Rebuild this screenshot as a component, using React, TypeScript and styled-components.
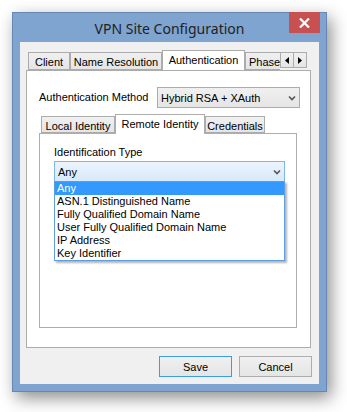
import React from 'react'
import styled, { createGlobalStyle } from 'styled-components'

const GlobalStyle = createGlobalStyle`
  html, body {
    margin: 0;
    padding: 0;
    background: #ffffff;
  }
  body {
    font-family: "Liberation Sans", Arial, sans-serif;
    font-size: 11px;
    color: #000;
  }
`

const Page = styled.div`
  width: 347px;
  height: 412px;
  box-sizing: border-box;
  padding: 12px 0 0 12px;
  overflow: hidden;
`

const Window = styled.div`
  width: 315px;
  height: 380px;
  box-sizing: border-box;
  background: #7ea4cf;
  border: 1px solid #6488b3;
  box-shadow: 4px 6px 16px rgba(0, 0, 0, 0.45);
  display: flex;
  flex-direction: column;
`

const TitleBar = styled.div`
  height: 29px;
  display: grid;
  grid-template-columns: 1fr auto 1fr;
  align-items: center;
`

const Title = styled.div`
  grid-column: 2;
  font-family: "Noto Sans", "Open Sans", sans-serif;
  font-size: 14px;
  color: #222;
  padding-top: 1px;
`

const CloseButton = styled.div`
  grid-column: 3;
  justify-self: end;
  align-self: start;
  width: 31px;
  height: 21px;
  margin: -1px 6px 0 0;
  background: #c75050;
  display: flex;
  align-items: center;
  justify-content: center;
`

const ClientArea = styled.div`
  flex: 1;
  margin: 0 7px 7px;
  background: #f0f0f0;
  padding-top: 8px;
  display: flex;
  flex-direction: column;
`

const TabStrip = styled.div<{ $inset: number }>`
  display: flex;
  align-items: flex-end;
  margin-left: ${p => p.$inset}px;
  position: relative;
  z-index: 1;
`

const TabClip = styled.div<{ $width: number }>`
  width: ${p => p.$width}px;
  overflow: hidden;
  display: flex;
  align-items: flex-end;
`

const Tab = styled.div<{ $width: number; $active?: boolean; $h: number }>`
  flex: none;
  width: ${p => p.$width}px;
  height: ${p => (p.$active ? p.$h + 3 : p.$h)}px;
  box-sizing: border-box;
  border: 1px solid #acacac;
  border-bottom: ${p => (p.$active ? 'none' : '1px solid #acacac')};
  margin-bottom: ${p => (p.$active ? '-1px' : '0')};
  background: ${p => (p.$active ? '#ffffff' : 'linear-gradient(#f0f0f0, #e5e5e5)')};
  display: flex;
  justify-content: center;
  padding-top: 3px;
  white-space: nowrap;
  font-size: 11px;
`

const PhaseTab = styled(Tab)`
  justify-content: flex-start;
  padding-left: 3px;
`

const ScrollArrows = styled.div`
  display: flex;
  align-self: flex-start;
  margin-top: 2px;
`

const ArrowButton = styled.div`
  width: 14px;
  height: 16px;
  box-sizing: border-box;
  border: 1px solid #acacac;
  background: linear-gradient(#f0f0f0, #e5e5e5);
  display: flex;
  align-items: center;
  justify-content: center;
  & + & {
    margin-left: -1px;
  }
`

const OuterPanel = styled.div`
  width: 285px;
  height: 278px;
  margin-left: 6px;
  box-sizing: border-box;
  background: #ffffff;
  border: 1px solid #acacac;
  padding: 16px 0 0 12px;
  display: flex;
  flex-direction: column;
`

const FieldRow = styled.div`
  display: flex;
  align-items: center;
  justify-content: space-between;
  width: 261px;
`

const Label = styled.span`
  font-size: 11px;
  line-height: 13px;
  white-space: nowrap;
`

const Select = styled.div<{ $focused?: boolean }>`
  position: relative;
  width: ${p => (p.$focused ? 231 : 143)}px;
  height: 21px;
  box-sizing: border-box;
  border: 1px solid ${p => (p.$focused ? '#7eb4ea' : '#acacac')};
  background: ${p =>
    p.$focused ? 'linear-gradient(#ecf4fc, #d7e9fb)' : 'linear-gradient(#f0f0f0, #e5e5e5)'};
  display: flex;
  align-items: center;
  justify-content: space-between;
  padding: 0 3px 0 3px;
  font-size: 11px;
`

const InnerSection = styled.div`
  margin-top: 6px;
  display: flex;
  flex-direction: column;
`

const InnerPanel = styled.div`
  width: 258px;
  height: 195px;
  box-sizing: border-box;
  background: #ffffff;
  border: 1px solid #adadad;
  padding: 12px 0 0 14px;
  display: flex;
  flex-direction: column;
`

const ComboWrap = styled.div`
  position: relative;
  margin-top: 2px;
  width: 231px;
`

const DropList = styled.ul`
  position: absolute;
  top: 20px;
  left: 0;
  width: 231px;
  box-sizing: border-box;
  margin: 0;
  padding: 0;
  list-style: none;
  background: #ffffff;
  border: 1px solid #5b9ee3;
  box-shadow: 2px 2px 2px rgba(0, 0, 0, 0.3);
  z-index: 5;
`

const DropItem = styled.li<{ $selected?: boolean }>`
  height: 13px;
  line-height: 13px;
  padding-left: 2px;
  font-size: 11px;
  background: ${p => (p.$selected ? '#3399ff' : 'transparent')};
  color: ${p => (p.$selected ? '#ffffff' : '#000000')};
  white-space: nowrap;
`

const ButtonRow = styled.div`
  display: flex;
  justify-content: flex-end;
  gap: 7px;
  margin-top: 8px;
  padding-right: 7px;
`

const Button = styled.div<{ $default?: boolean }>`
  width: 73px;
  height: 21px;
  box-sizing: border-box;
  border: 1px solid ${p => (p.$default ? '#3c9ce8' : '#adadad')};
  background: linear-gradient(#f0f0f0, #e5e5e5);
  display: flex;
  align-items: center;
  justify-content: center;
  font-size: 11px;
`

const Chevron = () => (
  <svg width="8" height="6" viewBox="0 0 8 6">
    <path d="M1 1.5 L4 4.5 L7 1.5" fill="none" stroke="#555" strokeWidth="1.6" />
  </svg>
)

const Triangle = ({ dir }: { dir: 'left' | 'right' }) => (
  <svg width="4" height="7" viewBox="0 0 4 7">
    <path d={dir === 'left' ? 'M4 0 L0 3.5 L4 7 Z' : 'M0 0 L4 3.5 L0 7 Z'} fill="#000" />
  </svg>
)

const identities = [
  'Any',
  'ASN.1 Distinguished Name',
  'Fully Qualified Domain Name',
  'User Fully Qualified Domain Name',
  'IP Address',
  'Key Identifier',
]

export default function App() {
  return (
    <Page>
      <GlobalStyle />
      <Window>
        <TitleBar>
          <Title>VPN Site Configuration</Title>
          <CloseButton>
            <svg width="11" height="10" viewBox="0 0 11 10">
              <path d="M1 0.5 L10 9.5 M10 0.5 L1 9.5" stroke="#fff" strokeWidth="2.2" />
            </svg>
          </CloseButton>
        </TitleBar>
        <ClientArea>
          <TabStrip $inset={8}>
            <TabClip $width={252}>
              <Tab $width={42} $h={18}>Client</Tab>
              <Tab $width={92} $h={18}>Name Resolution</Tab>
              <Tab $width={83} $h={18} $active>Authentication</Tab>
              <PhaseTab $width={60} $h={18}>Phase</PhaseTab>
            </TabClip>
            <ScrollArrows>
              <ArrowButton><Triangle dir="left" /></ArrowButton>
              <ArrowButton><Triangle dir="right" /></ArrowButton>
            </ScrollArrows>
          </TabStrip>
          <OuterPanel>
            <FieldRow>
              <Label>Authentication Method</Label>
              <Select>
                <span>Hybrid RSA + XAuth</span>
                <Chevron />
              </Select>
            </FieldRow>
            <InnerSection>
              <TabStrip $inset={2}>
                <Tab $width={74} $h={17}>Local Identity</Tab>
                <Tab $width={90} $h={17} $active>Remote Identity</Tab>
                <Tab $width={60} $h={17}>Credentials</Tab>
              </TabStrip>
              <InnerPanel>
                <Label>Identification Type</Label>
                <ComboWrap>
                  <Select $focused>
                    <span>Any</span>
                    <Chevron />
                  </Select>
                  <DropList>
                    {identities.map((name, i) => (
                      <DropItem key={name} $selected={i === 0}>{name}</DropItem>
                    ))}
                  </DropList>
                </ComboWrap>
              </InnerPanel>
            </InnerSection>
          </OuterPanel>
          <ButtonRow>
            <Button $default>Save</Button>
            <Button>Cancel</Button>
          </ButtonRow>
        </ClientArea>
      </Window>
    </Page>
  )
}
